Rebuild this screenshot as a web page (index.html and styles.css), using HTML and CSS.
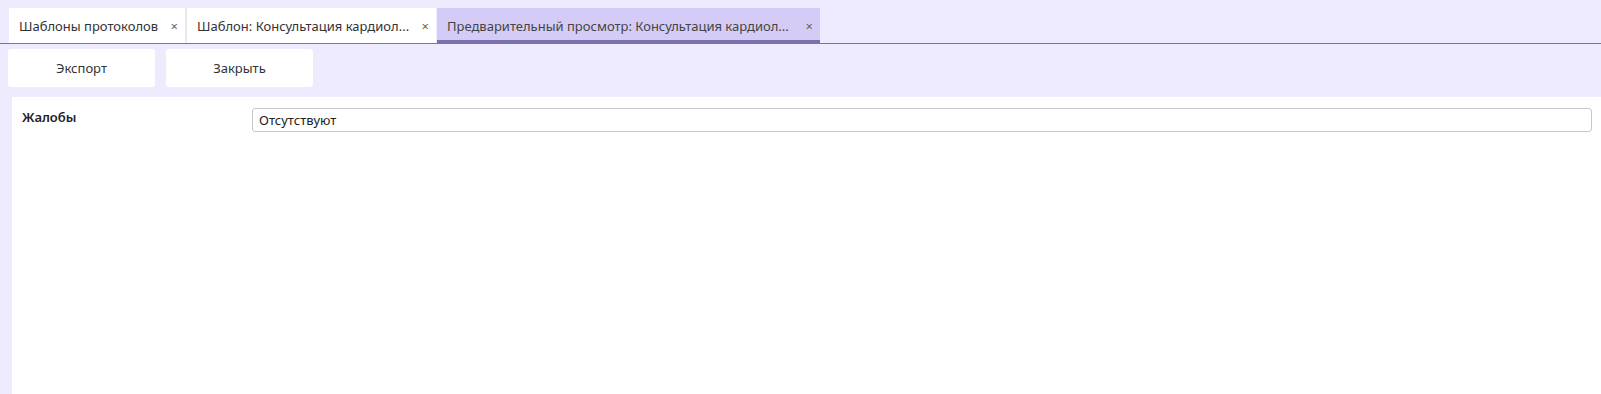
FILE: index.html
```html
<!DOCTYPE html>
<html lang="ru">
<head>
<meta charset="utf-8">
<title>Предварительный просмотр</title>
<link rel="stylesheet" href="styles.css">
</head>
<body>
<div class="app">
  <div class="tabbar">
    <div class="tab tab-first"><span class="tab-title">Шаблоны протоколов</span><span class="tab-close">×</span></div>
    <div class="tab tab-second"><span class="tab-title">Шаблон: Консультация кардиол...</span><span class="tab-close">×</span></div>
    <div class="tab tab-active"><span class="tab-title">Предварительный просмотр: Консультация кардиол...</span><span class="tab-close">×</span></div>
  </div>
  <div class="toolbar">
    <button class="btn">Экспорт</button>
    <button class="btn">Закрыть</button>
  </div>
  <div class="panel">
    <div class="row">
      <div class="label">Жалобы</div>
      <div class="field">Отсутствуют</div>
    </div>
  </div>
</div>
</body>
</html>
```
FILE: styles.css
```css
html, body {
  margin: 0;
  padding: 0;
  height: 100%;
}
body {
  background: #eeebfe;
  font-family: "Noto Sans", "Open Sans", sans-serif;
  font-size: 13px;
  color: #333;
  overflow: hidden;
}
.app {
  display: flex;
  flex-direction: column;
  height: 100%;
}
.tabbar {
  display: flex;
  align-items: stretch;
  padding: 8px 0 0 9px;
  height: 35px;
  border-bottom: 1px solid #7b6fae;
}
.tab {
  display: flex;
  align-items: center;
  box-sizing: border-box;
  background: #fff;
  padding: 0 7px 0 10px;
  white-space: nowrap;
}
.tab-first {
  width: 178px;
  border-right: 2px solid #e9e9ee;
}
.tab-second {
  width: 249px;
}
.tab-active {
  width: 383px;
  margin-left: 1px;
  background: #d4ccf7;
  border-bottom: 3px solid #7b6fae;
  padding-top: 3px;
  color: #444;
}
.tab-title {
  flex: 1;
}
.tab-close {
  color: #666;
  font-size: 13px;
  margin-left: 8px;
}
.toolbar {
  display: flex;
  gap: 11px;
  padding: 5px 0 0 8px;
}
.btn {
  width: 147px;
  height: 38px;
  background: #fff;
  border: none;
  border-radius: 3px;
  font-family: inherit;
  font-size: 13px;
  color: #333;
  padding: 0;
}
.panel {
  flex: 1;
  margin: 10px 0 0 12px;
  background: #fff;
  padding: 11px 9px 0 10px;
}
.row {
  display: flex;
  align-items: flex-start;
}
.label {
  width: 230px;
  flex: none;
  font-weight: 600;
  color: #222;
  line-height: 18px;
}
.field {
  flex: 1;
  height: 24px;
  box-sizing: border-box;
  border: 1px solid #c8c8c8;
  border-radius: 3px;
  padding: 0 6px;
  line-height: 22px;
  color: #222;
}
```
